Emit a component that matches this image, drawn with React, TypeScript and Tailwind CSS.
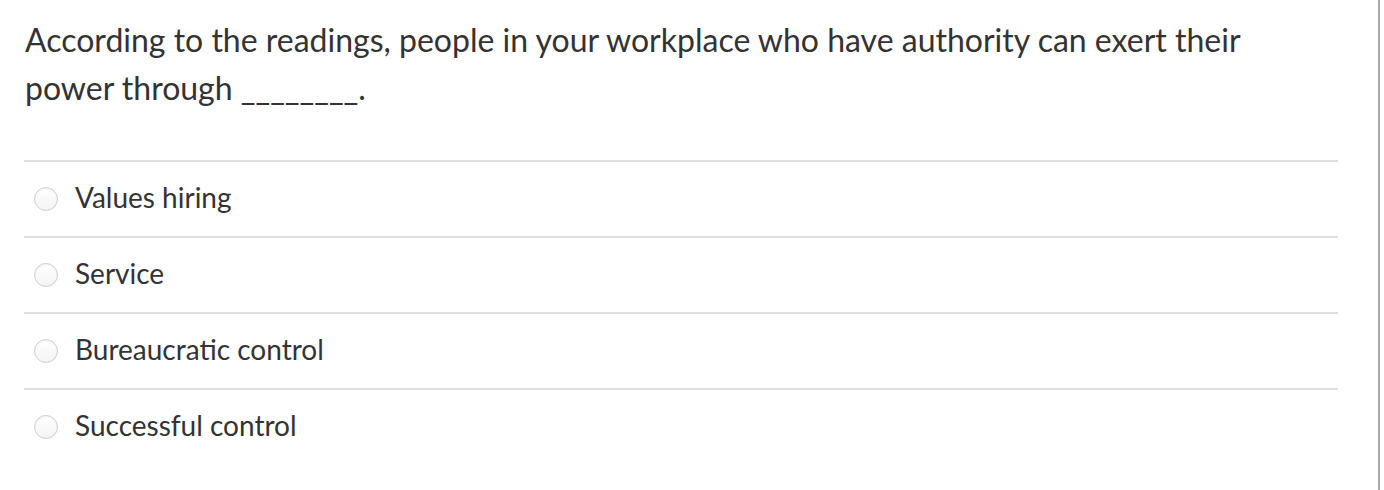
const ANSWERS = ['Values hiring', 'Service', 'Bureaucratic control', 'Successful control'];

export default function App() {
  return (
    <div className="flex h-[490px] w-[1384px] bg-white font-['Lato','Noto_Sans',sans-serif] text-[#333333]">
      <div className="flex-1 pl-[24px] pr-[40px]">
        <div className="max-w-[1290px] pt-[16px] pl-[1px] pb-[48px] text-[32px] leading-[48px]">
          According to the readings, people in your workplace who have authority can exert their power through ________.
        </div>
        <div>
          {ANSWERS.map((a) => (
            <div key={a} className="flex h-[76px] items-center border-t-2 border-[#dedede]">
              <span className="ml-[10px] h-[24px] w-[24px] shrink-0 rounded-full border border-[#cfcfcf] bg-gradient-to-b from-white to-[#f4f4f4] shadow-[inset_0_1px_2px_rgba(0,0,0,0.06)]" />
              <span className="ml-[17px] pb-[5px] text-[28px] leading-[32px]">{a}</span>
            </div>
          ))}
        </div>
      </div>
      <div className="w-[2px] bg-[#ababab]" />
      <div className="w-[4px]" />
    </div>
  );
}
